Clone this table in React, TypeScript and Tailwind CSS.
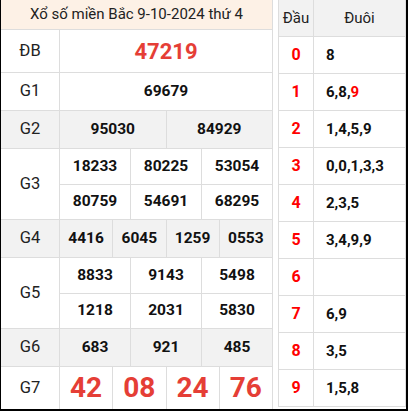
const font = { fontFamily: "Roboto, 'Noto Sans', sans-serif" };

type Row = { label: string; nums: string[][]; gray?: boolean; kind?: "db" | "g7"; h: string };

const rows: Row[] = [
  { label: "ĐB", nums: [["47219"]], kind: "db", h: "h-[42px]" },
  { label: "G1", nums: [["69679"]], h: "h-[37px]" },
  { label: "G2", nums: [["95030", "84929"]], gray: true, h: "h-[37px]" },
  { label: "G3", nums: [["18233", "80225", "53054"], ["80759", "54691", "68295"]], h: "h-[35px]" },
  { label: "G4", nums: [["4416", "6045", "1259", "0553"]], gray: true, h: "h-[37px]" },
  { label: "G5", nums: [["8833", "9143", "5498"], ["1218", "2031", "5830"]], h: "h-[35px]" },
  { label: "G6", nums: [["683", "921", "485"]], gray: true, h: "h-[37px]" },
  { label: "G7", nums: [["42", "08", "24", "76"]], kind: "g7", h: "h-[42px]" },
];

const tails: { d: string; t: React.ReactNode }[] = [
  { d: "0", t: "8" },
  { d: "1", t: <>6,8,<span className="text-[#ff0000]">9</span></> },
  { d: "2", t: "1,4,5,9" },
  { d: "3", t: "0,0,1,3,3" },
  { d: "4", t: "2,3,5" },
  { d: "5", t: "3,4,9,9" },
  { d: "6", t: "" },
  { d: "7", t: "6,9" },
  { d: "8", t: "3,5" },
  { d: "9", t: "1,5,8" },
];

function numClass(kind?: "db" | "g7") {
  if (kind === "db") return "text-[22px] font-bold text-[#e53e36]";
  if (kind === "g7") return "text-[28px] font-bold text-[#e53e36]";
  return "text-[15.5px] font-bold text-[#111]";
}

export default function App() {
  return (
    <div
      className="w-[408px] h-[411px] bg-white flex border-l border-r-2 border-b-2 border-black text-[#222]"
      style={font}
    >
      {/* Left: results */}
      <div className="w-[272px] flex flex-col border-r border-[#ddd]">
        <div className="h-[37px] bg-[#fdf1e6] border-b border-[#ddd] flex items-center justify-center text-[15px]">
          Xổ số miền Bắc 9-10-2024 thứ 4
        </div>
        {rows.map((r, i) => (
          <div
            key={r.label}
            className={`flex ${i < rows.length - 1 ? "border-b border-[#ddd]" : ""} ${r.gray ? "bg-[#f2f2f2]" : ""}`}
          >
            <div className="w-[59px] shrink-0 border-r border-[#ddd] flex items-center justify-center text-[16.5px]">
              {r.label}
            </div>
            <div className="flex-1 flex flex-col">
              {r.nums.map((line, j) => (
                <div key={j} className={`flex ${r.h} ${j > 0 ? "border-t border-[#ddd]" : ""}`}>
                  {line.map((n, k) => (
                    <div
                      key={k}
                      className={`flex-1 flex items-center justify-center ${k > 0 ? "border-l border-[#ddd]" : ""} ${numClass(r.kind)}`}
                    >
                      {n}
                    </div>
                  ))}
                </div>
              ))}
            </div>
          </div>
        ))}
      </div>

      <div className="w-[5px]" />

      {/* Right: head / tail */}
      <div className="w-[128px] self-start flex flex-col border-l border-r border-[#ddd]">
        <div className="h-[37px] flex bg-[#f2f2f2] border-b border-[#ddd] text-[15px]">
          <div className="w-[35px] border-r border-[#ddd] flex items-center justify-center">Đầu</div>
          <div className="flex-1 flex items-center justify-center">Đuôi</div>
        </div>
        {tails.map((t) => (
          <div key={t.d} className="h-[37px] flex border-b border-[#ddd]">
            <div className="w-[35px] border-r border-[#ddd] flex items-center justify-center text-[16px] font-bold text-[#ff0000]">
              {t.d}
            </div>
            <div className="flex-1 flex items-center pl-3 text-[15px] font-bold text-[#111]">{t.t}</div>
          </div>
        ))}
      </div>
    </div>
  );
}
